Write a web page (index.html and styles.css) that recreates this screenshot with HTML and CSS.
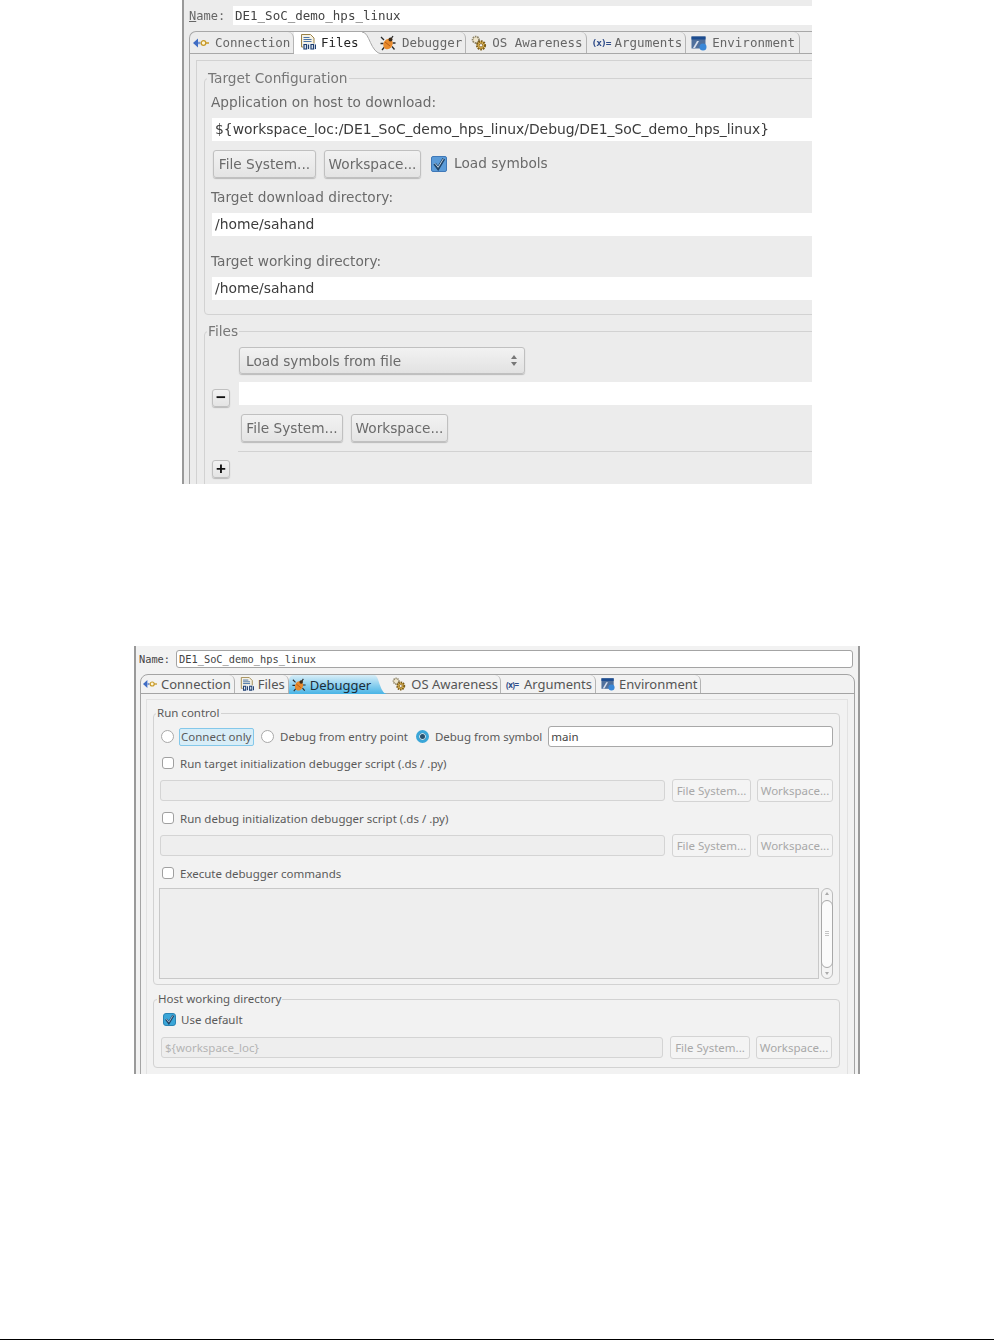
FILE: index.html
```html
<!DOCTYPE html>
<html lang="en">
<head>
  <meta charset="UTF-8">
  <meta name="viewport" content="width=device-width, initial-scale=1.0">
  <title>Debug configuration tabs</title>
  <link rel="stylesheet" href="styles.css">
</head>
<body>

  <!-- Icons used by both dialogs -->
  <svg class="sprite" xmlns="http://www.w3.org/2000/svg">
    <symbol id="i-conn" viewBox="0 0 16 16">
      <path d="M0 8l5-4.500v9z" fill="#3f6cc4"/>
      <path d="M5 6.800h2.500v2.400H5z" fill="#7a9ad8"/>
      <circle cx="10.500" cy="8" r="2.300" fill="#fff6d8" stroke="#c89a28" stroke-width="1.300"/>
      <path d="M12.500 8H16" stroke="#c89a28" stroke-width="1.500"/>
    </symbol>
    <symbol id="i-files" viewBox="0 0 16 16">
      <path d="M1.500.5h9l3.500 3.500v9h-12.500z" fill="#f6f2e4" stroke="#9a8248"/>
      <path d="M3.500 3.500h6M3.500 5.500h8M3.500 7.500h8" stroke="#4a74a8" stroke-width="1.100"/>
      <path d="M3 9.500h13v6.500H3z" fill="#eef2f8"/>
      <path d="M4 10.500v4.500h2.500v-4.500zM8.500 10.500v4.500M11 10.500v4.500h2.500v-4.500zM15.500 10.500v4.500" fill="none" stroke="#1f3f70" stroke-width="1.200"/>
    </symbol>
    <symbol id="i-bug" viewBox="0 0 16 16">
      <path d="M4 5L1 2M3.500 8.500H.5M4.500 12L2 15M11 4l2-3M12.500 8H15.500M12 11.500l2.500 3" stroke="#2a2a2a" stroke-width="1.300"/>
      <ellipse cx="8" cy="9" rx="4.500" ry="5.500" transform="rotate(25 8 9)" fill="#e88a2c"/>
      <circle cx="10.500" cy="4.500" r="2" fill="#3a2a1a"/>
      <path d="M5 7l5 4" stroke="#b85a14"/>
    </symbol>
    <symbol id="i-gears" viewBox="0 0 16 16">
      <circle cx="4.800" cy="4.800" r="3.200" fill="#efe6cc" stroke="#8e8468" stroke-width="1.800" stroke-dasharray="1.500 .8"/>
      <circle cx="10" cy="10.300" r="4" fill="#e2b854" stroke="#7c5c18" stroke-width="2.200" stroke-dasharray="1.700 .9"/>
      <circle cx="10" cy="10.300" r="1.700" fill="#f6f6f6" stroke="#7c5c18" stroke-width=".8"/>
    </symbol>
    <symbol id="i-env" viewBox="0 0 16 16">
      <path d="M.5 1.500h14v12H.5z" fill="#50709c"/>
      <path d="M.5 1.500h14v3H.5z" fill="#1c4c90"/>
      <path d="M2 13l4-7h2l-4 7z" fill="#d8e0ec"/>
      <circle cx="12" cy="12" r="3.500" fill="#3a88d8"/>
    </symbol>
    <symbol id="i-check" viewBox="0 0 16 16">
      <path d="M3 7.500L7 13l6.500-11" fill="none" stroke="#1f4468" stroke-width="3.400"/>
      <path d="M3.200 7L7 11.800l6-9.800" fill="none" stroke="#d4e4f2" stroke-width="1"/>
    </symbol>
    <linearGradient id="active-blue" x1="0" y1="0" x2="0" y2="1">
      <stop offset="0" stop-color="#d8eef8"/>
      <stop offset="1" stop-color="#48b4e6"/>
    </linearGradient>
  </svg>

  <!-- First dialog: Files tab -->
  <section class="dialog dialog-files">
    <div class="name-row">
      <span class="name-label"><u>N</u>ame:</span>
      <div class="field name-field">DE1_SoC_demo_hps_linux</div>
    </div>

    <div class="folder">
      <div class="tabs">
        <div class="tab tab-first"><svg class="icon"><use href="#i-conn"/></svg>Connection</div>
        <div class="tab tab-active"><svg class="icon"><use href="#i-files"/></svg>Files
          <svg class="tab-curve" viewBox="0 0 22 22"><path d="M0 0h2C10 0 10 21 22 22H0z" fill="#fff"/><path d="M2 0C10 0 10 21 22 22" fill="none" stroke="#a8a8a8"/></svg>
        </div>
        <div class="tab tab-next"><svg class="icon"><use href="#i-bug"/></svg>Debugger</div>
        <div class="tab"><svg class="icon"><use href="#i-gears"/></svg>OS Awareness</div>
        <div class="tab"><span class="var-icon">(x)=</span>Arguments</div>
        <div class="tab"><svg class="icon"><use href="#i-env"/></svg>Environment</div>
      </div>

      <div class="panel">
        <fieldset class="group">
          <legend>Target Configuration</legend>
          <div class="label first">Application on host to download:</div>
          <div class="field">${workspace_loc:/DE1_SoC_demo_hps_linux/Debug/DE1_SoC_demo_hps_linux}</div>
          <div class="button-row">
            <div class="btn btn-fs">File System...</div>
            <div class="btn btn-ws">Workspace...</div>
            <span class="check checked"><svg><use href="#i-check"/></svg></span>
            <span class="check-label">Load symbols</span>
          </div>
          <div class="label">Target download directory:</div>
          <div class="field">/home/sahand</div>
          <div class="label label-far">Target working directory:</div>
          <div class="field">/home/sahand</div>
        </fieldset>

        <fieldset class="group group-list">
          <legend>Files</legend>
          <div class="file-entry">
            <div class="btn btn-square btn-minus">&minus;</div>
            <div class="file-entry-body">
              <div class="combo">
                Load symbols from file
                <span class="combo-arrows"><i class="up"></i><i class="down"></i></span>
              </div>
              <div class="field"></div>
              <div class="button-row button-row-list">
                <div class="btn btn-fs">File System...</div>
                <div class="btn btn-ws">Workspace...</div>
              </div>
            </div>
          </div>
          <div class="list-sep"></div>
          <div class="btn btn-square btn-plus">+</div>
        </fieldset>
      </div>
    </div>
  </section>

  <!-- Second dialog: Debugger tab -->
  <section class="dialog dialog-debugger">
    <div class="name-row">
      <span class="name-label">Name:</span>
      <div class="field name-field">DE1_SoC_demo_hps_linux</div>
    </div>

    <div class="folder">
      <div class="tabs">
        <div class="tab tab-first"><svg class="icon"><use href="#i-conn"/></svg>Connection</div>
        <div class="tab"><svg class="icon"><use href="#i-files"/></svg>Files</div>
        <div class="tab tab-active"><svg class="icon"><use href="#i-bug"/></svg>Debugger
          <svg class="tab-curve" viewBox="0 0 22 19" preserveAspectRatio="none"><path d="M0 0h2C10 0 10 18 22 19H0z" fill="url(#active-blue)"/></svg>
        </div>
        <div class="tab tab-next"><svg class="icon"><use href="#i-gears"/></svg>OS Awareness</div>
        <div class="tab"><span class="var-icon">(x)=</span>Arguments</div>
        <div class="tab"><svg class="icon"><use href="#i-env"/></svg>Environment</div>
      </div>

      <div class="panel">
        <fieldset class="group">
          <legend>Run control</legend>
          <div class="radio-row">
            <span class="radio"></span>
            <span class="focus-label">Connect only</span>
            <span class="radio"></span>
            <span class="radio-label">Debug from entry point</span>
            <span class="radio selected"></span>
            <span class="radio-label">Debug from symbol</span>
            <div class="field symbol-field">main</div>
          </div>

          <div class="check-row">
            <span class="check"></span>
            <span class="check-label">Run target initialization debugger script (.ds / .py)</span>
          </div>
          <div class="path-row">
            <div class="field disabled"></div>
            <div class="btn btn-fs disabled">File System...</div>
            <div class="btn btn-ws disabled">Workspace...</div>
          </div>

          <div class="check-row">
            <span class="check"></span>
            <span class="check-label">Run debug initialization debugger script (.ds / .py)</span>
          </div>
          <div class="path-row">
            <div class="field disabled"></div>
            <div class="btn btn-fs disabled">File System...</div>
            <div class="btn btn-ws disabled">Workspace...</div>
          </div>

          <div class="check-row">
            <span class="check"></span>
            <span class="check-label">Execute debugger commands</span>
          </div>
          <div class="commands-row">
            <div class="commands"></div>
            <div class="scrollbar">
              <i class="up"></i>
              <div class="thumb"><b></b><b></b><b></b></div>
              <i class="down"></i>
            </div>
          </div>
        </fieldset>

        <fieldset class="group group-host">
          <legend>Host working directory</legend>
          <div class="check-row">
            <span class="check checked"><svg><use href="#i-check"/></svg></span>
            <span class="check-label">Use default</span>
          </div>
          <div class="path-row">
            <div class="field disabled">${workspace_loc}</div>
            <div class="btn btn-fs disabled">File System...</div>
            <div class="btn btn-ws disabled">Workspace...</div>
          </div>
        </fieldset>
      </div>
    </div>
  </section>

  <div class="page-rule"></div>

</body>
</html>
```

FILE: styles.css
```css
* {
  box-sizing: border-box;
}

html, body {
  height: 100%;
}

body {
  margin: 0;
  background: #fff;
  display: flex;
  flex-direction: column;
  overflow: hidden;
}

.sprite {
  display: block;
  width: 0;
  height: 0;
}

.dialog {
  overflow: hidden;
  flex-shrink: 0;
}

.name-row {
  display: flex;
  align-items: center;
}

.name-label,
.name-field,
.tab {
  white-space: nowrap;
}

.field {
  background: #fff;
  white-space: nowrap;
}

.tabs {
  display: flex;
}

.tab {
  display: flex;
  align-items: center;
  position: relative;
  border-right: 1px solid #b4b4b4;
  border-top-right-radius: 6px;
}

.tab-active {
  border-right: none;
  border-top-right-radius: 0;
}

.tab-curve {
  position: absolute;
  top: 0;
  left: 100%;
  width: 22px;
  height: 100%;
}

.icon {
  flex-shrink: 0;
}

.var-icon {
  font-weight: bold;
  color: #2c4a88;
  letter-spacing: -1px;
  flex-shrink: 0;
}

.group {
  margin: 0;
  min-width: 0;
  border: 1px solid #d2d2d2;
  border-radius: 4px;
}

.group legend {
  padding: 0 1px;
}

.btn {
  display: flex;
  align-items: center;
  justify-content: center;
  white-space: nowrap;
  flex-shrink: 0;
  border-radius: 3px;
}

.check,
.radio {
  display: block;
  flex-shrink: 0;
}

.check svg {
  display: block;
  width: 100%;
  height: 100%;
}

/* First dialog */
.dialog-files {
  margin-left: 182px;
  width: 630px;
  height: 484px;
  background: #ececec;
  border-left: 2px solid #999;
  color: #6a6a6a;
  font-family: "DejaVu Sans", sans-serif;
  font-size: 13.7px;
  filter: blur(.35px);
}

.dialog-files .name-row {
  width: 640px;
  padding: 6px 0 0 5px;
}

.dialog-files .name-label {
  width: 44px;
  font-family: "DejaVu Sans Mono", monospace;
  font-size: 12px;
  color: #666;
}

.dialog-files .folder {
  width: 640px;
  margin: 6px 0 0 5px;
  border-left: 1px solid #a8a8a8;
  border-top: 1px solid #a8a8a8;
  border-top-left-radius: 7px;
}

.dialog-files .tabs {
  height: 22px;
  border-bottom: 1px solid #a8a8a8;
  font-family: "DejaVu Sans Mono", monospace;
  font-size: 12.5px;
  color: #666;
}

.dialog-files .tab {
  height: 21px;
  padding: 0 3px 0 5px;
  gap: 5px;
}

.dialog-files .tab-first {
  padding-left: 3px;
  gap: 6px;
  width: 104px;
}

.dialog-files .tab-active {
  width: 66px;
  padding: 0 0 2px 6px;
  height: 22px;
  background: #fff;
  color: #222;
}

.dialog-files .tab-next {
  margin-left: 20px;
  padding-left: 0;
  gap: 6px;
}

.dialog-files .tab:last-child {
  padding-right: 4px;
}

.dialog-files .icon {
  width: 16px;
  height: 16px;
}

.dialog-files .var-icon {
  width: 18px;
  font-size: 9.5px;
}

.dialog-files .panel {
  margin: 6px 0 0 6px;
  border-left: 1px solid #d2d2d2;
  border-top: 1px solid #d2d2d2;
  padding: 8px 0 0 7px;
}

.dialog-files .group {
  padding: 6px 0 14px 6px;
}

.dialog-files .group legend {
  margin-left: -4px;
  line-height: 18px;
  color: #777;
}

.dialog-files .group-list {
  margin-top: 7px;
  padding-top: 7px;
}

.dialog-files .label {
  height: 18px;
  line-height: 18px;
  margin-top: 10px;
}

.dialog-files .label.first {
  margin-top: 0;
}

.dialog-files .label-far {
  margin-top: 16px;
}

.dialog-files .field {
  height: 23px;
  line-height: 23px;
  margin-top: 7px;
  margin-left: 1px;
  padding-left: 3px;
  font-size: 13.9px;
  color: #3c3c3c;
}

.dialog-files .name-row .name-field {
  flex: 1;
  height: 19px;
  line-height: 19px;
  margin: 0;
  padding-left: 2px;
  font-family: "DejaVu Sans Mono", monospace;
  font-size: 12.5px;
  color: #444;
}

.button-row {
  display: flex;
  align-items: center;
}

.dialog-files .button-row {
  margin: 9px 0 0 2px;
  gap: 8px;
}

.dialog-files .btn {
  height: 28px;
  border: 1px solid #c0c0c0;
  background: linear-gradient(#f2f2f2, #e4e4e4);
  box-shadow: 0 1px 1px #bbb;
}

.dialog-files .btn-fs {
  width: 103px;
}

.dialog-files .btn-ws {
  width: 97px;
}

.dialog-files .check {
  width: 16px;
  height: 16px;
  margin-left: 2px;
  border: 1px solid #3f78b8;
  border-radius: 2px;
  background: #5b9bd8;
}

.dialog-files .check-label {
  margin: -2px 0 0 -1px;
}

.file-entry {
  display: flex;
  gap: 9px;
  margin-left: 1px;
}

.dialog-files .btn-square {
  width: 18px;
  height: 18px;
  font-family: "Liberation Sans", sans-serif;
  font-weight: bold;
  font-size: 17px;
  color: #111;
}

.btn-minus {
  margin-top: 42px;
}

.file-entry-body {
  flex: 1;
}

.combo {
  display: flex;
  align-items: center;
  justify-content: space-between;
  width: 286px;
  height: 27px;
  padding: 0 7px 0 6px;
  border: 1px solid #c0c0c0;
  border-radius: 3px;
  background: linear-gradient(#f2f2f2, #e2e2e2);
  box-shadow: 0 1px 1px #bbb;
}

.combo-arrows {
  display: flex;
  flex-direction: column;
  gap: 3px;
}

.up,
.down {
  display: block;
  width: 0;
  height: 0;
  border-left: 3px solid transparent;
  border-right: 3px solid transparent;
}

.up {
  border-bottom: 4px solid #777;
}

.down {
  border-top: 4px solid #777;
}

.dialog-files .file-entry-body .field {
  margin: 8px 0 0;
}

.dialog-files .button-row-list {
  margin: 9px 0 0 2px;
}

.dialog-files .button-row-list .btn-fs {
  width: 102px;
}

.list-sep {
  height: 1px;
  margin: 9px 0 0 27px;
  background: #d2d2d2;
}

.dialog-files .btn-plus {
  margin: 8px 0 0 1px;
}

/* Second dialog */
.dialog-debugger {
  margin: 162px 0 0 134px;
  width: 726px;
  height: 428px;
  background: #f2f2f2;
  border-left: 2px solid #9a9a9a;
  border-right: 2px solid #9a9a9a;
  color: #5a5a5a;
  font-family: "Noto Sans", sans-serif;
  font-size: 11.5px;
}

.dialog-debugger .name-row {
  padding: 4px 5px 0 3px;
}

.dialog-debugger .name-label {
  width: 37px;
  font-family: "DejaVu Sans Mono", monospace;
  font-size: 10.3px;
  color: #444;
}

.dialog-debugger .name-field {
  flex: 1;
  height: 18px;
  line-height: 16px;
  padding-left: 2px;
  border: 1px solid #a4a4a4;
  border-radius: 3px;
  font-family: "DejaVu Sans Mono", monospace;
  font-size: 10.35px;
  color: #444;
}

.dialog-debugger .folder {
  margin: 6px 3px 0 4px;
  height: 420px;
  border: 1px solid #a4a4a4;
  border-radius: 8px 8px 0 0;
}

.dialog-debugger .tabs {
  height: 19px;
  border-bottom: 1px solid #a4a4a4;
  font-size: 13px;
  color: #555;
}

.dialog-debugger .tab {
  height: 18px;
  padding: 0 3px 0 5px;
  gap: 4px;
}

.dialog-debugger .tab-first {
  padding-left: 2px;
}

.dialog-debugger .tab-active {
  height: 19px;
  padding: 0 2px 0 3px;
  background: linear-gradient(#d8eef8, #48b4e6);
  color: #1c2c38;
  border-radius: 5px 0 0 0;
}

.dialog-debugger .tab-curve {
  width: 14px;
}

.dialog-debugger .tab-next {
  margin-left: 19px;
  padding: 0 2px 0 0;
  gap: 5px;
}

.dialog-debugger .icon {
  width: 14px;
  height: 14px;
}

.dialog-debugger .var-icon {
  width: 14px;
  font-size: 8px;
  letter-spacing: -.5px;
}

.dialog-debugger .panel {
  margin: 5px 6px 0 5px;
  height: 400px;
  border: 1px solid #e2e2e2;
  padding: 6px 7px 0 6px;
}

.dialog-debugger .group {
  padding: 6px 6px 5px 5px;
}

.dialog-debugger .group legend {
  margin-left: -3px;
  line-height: 14px;
}

.dialog-debugger .group-host {
  margin-top: 7px;
  padding: 0 7px 8px 6px;
}

.radio-row {
  display: flex;
  align-items: center;
  height: 21px;
}

.radio {
  width: 13px;
  height: 13px;
  margin-left: 2px;
  border: 1px solid #a8a8a8;
  border-radius: 50%;
  background: #fff;
}

.radio.selected {
  margin-left: 8px;
  border: 3px solid #3aa6d8;
  background: #28506c;
  box-shadow: inset 0 0 0 1px #cfe8f4;
}

.radio-label {
  margin-left: 6px;
}

.radio-label + .radio {
  margin-left: 8px;
}

.focus-label {
  display: block;
  width: 75px;
  height: 18px;
  line-height: 16px;
  margin: 0 5px;
  padding-left: 1px;
  white-space: nowrap;
  border: 1px solid #84c8ea;
  border-radius: 2px;
  background: #d8edf7;
}

.focus-label + .radio {
  margin-left: 2px;
}

.dialog-debugger .symbol-field {
  flex: 1;
  height: 21px;
  line-height: 19px;
  margin-left: 6px;
  padding-left: 2px;
  border: 1px solid #a8a8a8;
  border-radius: 3px;
  color: #444;
}

.check-row {
  display: flex;
  align-items: center;
  height: 16px;
  margin-top: 8px;
  padding-left: 3px;
}

.dialog-debugger .check {
  width: 12px;
  height: 12px;
  margin-right: 6px;
  border: 1px solid #a0a0a0;
  border-radius: 3px;
  background: #fff;
}

.dialog-debugger .check.checked {
  width: 13px;
  height: 13px;
  margin-right: 5px;
  border-color: #2a84b4;
  background: #3aa6d8;
}

.path-row {
  display: flex;
  gap: 6px;
  height: 23px;
  margin-top: 8px;
  padding-left: 1px;
  align-items: center;
}

.group-host .check-row {
  margin-top: 5px;
}

.group-host .path-row {
  margin-top: 9px;
}

.dialog-debugger .path-row .field {
  flex: 1;
  height: 21px;
  line-height: 19px;
  margin-right: 1px;
  padding-left: 3px;
  background: #eeeeee;
  border: 1px solid #d4d4d4;
  border-radius: 3px;
  color: #b4b4b4;
}

.dialog-debugger .btn {
  height: 23px;
  font-size: 11.5px;
  border: 1px solid #d4d4d4;
  background: #f4f4f4;
  color: #a8a8a8;
}

.dialog-debugger .btn-fs {
  width: 79px;
}

.dialog-debugger .btn-ws {
  width: 76px;
}

.group-host .path-row .btn-fs {
  width: 80px;
}

.commands-row {
  display: flex;
  gap: 2px;
  height: 91px;
  margin-top: 7px;
}

.commands {
  width: 661px;
  background: #eeeeee;
  border: 1px solid #c8c8c8;
}

.scrollbar {
  display: flex;
  flex-direction: column;
  align-items: center;
  justify-content: space-between;
  width: 12px;
  padding: 3px 0;
  border: 1px solid #bcbcbc;
  border-radius: 6px;
  background: #f4f4f4;
}

.scrollbar .up {
  border-left-width: 2px;
  border-right-width: 2px;
  border-bottom: 3px solid #aaa;
}

.scrollbar .down {
  border-left-width: 2px;
  border-right-width: 2px;
  border-top: 3px solid #aaa;
}

.thumb {
  display: flex;
  flex-direction: column;
  align-items: center;
  justify-content: center;
  gap: 1px;
  width: 12px;
  height: 68px;
  border: 1px solid #a8a8a8;
  border-radius: 6px;
  background: #fbfbfb;
}

.thumb b {
  display: block;
  width: 4px;
  height: 1px;
  background: #c4c4c4;
}

.page-rule {
  height: 1px;
  margin-top: auto;
  background: #000;
}
```
